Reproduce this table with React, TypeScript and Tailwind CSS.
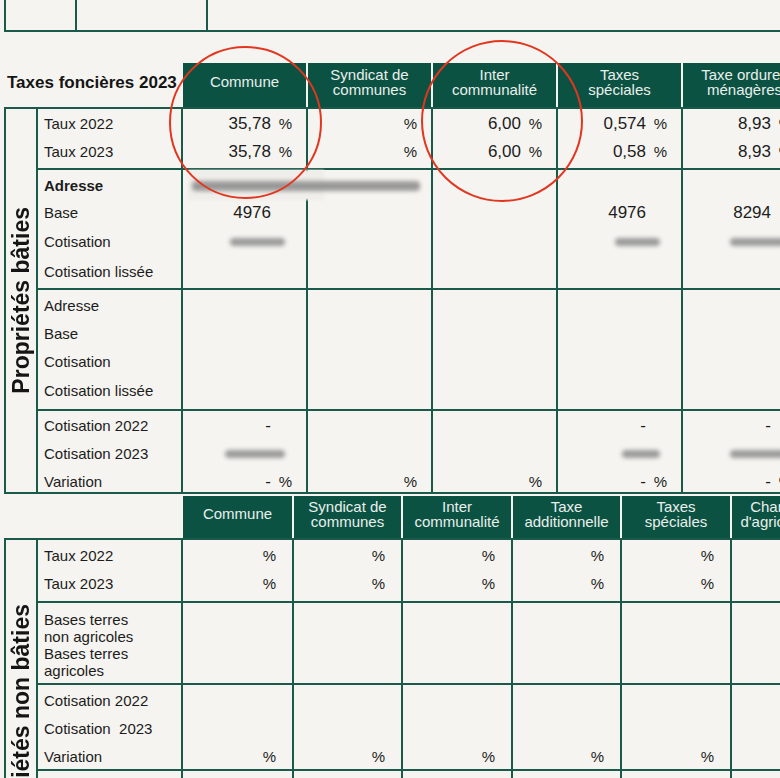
import React from "react"

type V = { n?: string; p?: boolean; b?: number }
type Row = { label: string; bold?: boolean; h: string; v?: V[] }
type Group = { h: string; pt: string; rows: Row[]; lines?: string[] }

const P: V = { p: true }
const E: V = {}

const head1 = [
  { w: "w-[123px]", t: "Commune" },
  { w: "w-[123px]", t: "Syndicat de\ncommunes" },
  { w: "w-[123px]", t: "Inter\ncommunalité" },
  { w: "w-[123px]", t: "Taxes\nspéciales" },
  { w: "w-[123px]", t: "Taxe ordures\nménagères" },
]

const head2 = [
  { w: "w-[109px]", t: "Commune" },
  { w: "w-[107px]", t: "Syndicat de\ncommunes" },
  { w: "w-[108px]", t: "Inter\ncommunalité" },
  { w: "w-[107px]", t: "Taxe\nadditionnelle" },
  { w: "w-[108px]", t: "Taxes\nspéciales" },
  { w: "w-[98px]", t: "Chambre\nd'agriculture" },
]

// group heights include their 2px bottom rule
const bati: Group[] = [
  {
    h: "h-[61px]",
    pt: "pt-[1px]",
    rows: [
      { label: "Taux 2022", h: "h-[28px]", v: [{ n: "35,78", p: true }, P, { n: "6,00", p: true }, { n: "0,574", p: true }, { n: "8,93", p: true }] },
      { label: "Taux 2023", h: "h-[28px]", v: [{ n: "35,78", p: true }, P, { n: "6,00", p: true }, { n: "0,58", p: true }, { n: "8,93", p: true }] },
    ],
  },
  {
    h: "h-[120px]",
    pt: "pt-[2px]",
    rows: [
      { label: "Adresse", bold: true, h: "h-[28px]" },
      { label: "Base", h: "h-[26px]", v: [{ n: "4976" }, E, E, { n: "4976" }, { n: "8294" }] },
      { label: "Cotisation", h: "h-[32px]", v: [{ b: 55 }, E, E, { b: 45 }, { b: 55 }] },
      { label: "Cotisation lissée", h: "h-[28px]" },
    ],
  },
  {
    h: "h-[121px]",
    pt: "pt-[2px]",
    rows: [
      { label: "Adresse", h: "h-[28px]" },
      { label: "Base", h: "h-[28px]" },
      { label: "Cotisation", h: "h-[29px]" },
      { label: "Cotisation lissée", h: "h-[28px]" },
    ],
  },
  {
    h: "h-[81px]",
    pt: "pt-[1px]",
    rows: [
      { label: "Cotisation 2022", h: "h-[28px]", v: [{ n: "-" }, E, E, { n: "-" }, { n: "-" }] },
      { label: "Cotisation 2023", h: "h-[28px]", v: [{ b: 60 }, E, E, { b: 38 }, { b: 55 }] },
      { label: "Variation", h: "h-[28px]", v: [{ n: "-", p: true }, P, P, { n: "-", p: true }, { n: "-", p: true }] },
    ],
  },
]

const nonBati: Group[] = [
  {
    h: "h-[63px]",
    pt: "pt-[2px]",
    rows: [
      { label: "Taux 2022", h: "h-[28px]", v: [P, P, P, P, P, P] },
      { label: "Taux 2023", h: "h-[29px]", v: [P, P, P, P, P, P] },
    ],
  },
  {
    h: "h-[82px]",
    pt: "pt-[8px]",
    rows: [],
    lines: ["Bases terres", "non agricoles", "Bases terres", "agricoles"],
  },
  {
    h: "h-[86px]",
    pt: "pt-[2px]",
    rows: [
      { label: "Cotisation 2022", h: "h-[28px]" },
      { label: "Cotisation  2023", h: "h-[28px]" },
      { label: "Variation", h: "h-[28px]", v: [P, P, P, P, P, P] },
    ],
  },
  { h: "h-[80px]", pt: "pt-[2px]", rows: [] },
]

function Cell({ v, pr }: { v?: V; pr: string }) {
  if (v?.b) {
    return (
      <div className={`flex h-full items-center justify-end ${pr}`}>
        <span className="mr-[7px] h-[8px] rounded-sm bg-[#9b9b9b] blur-[2px]" style={{ width: v.b }} />
      </div>
    )
  }
  return (
    <div className={`flex h-full items-center justify-end ${pr}`}>
      {v?.n && <span className="text-[17px]">{v.n}</span>}
      <span className="w-[21px] text-right text-[15px]">{v?.p ? "%" : ""}</span>
    </div>
  )
}

function Header({ cols, title, h }: { cols: { w: string; t: string }[]; title?: string; h: string }) {
  return (
    <div className={`flex ${h} shrink-0`}>
      <div className="flex w-[183px] shrink-0 items-center pb-[5px] pl-[7px] text-[17px] font-bold text-[#151515]">
        {title}
      </div>
      {cols.map((c, i) => (
        <div
          key={i}
          className={`${c.w} mr-[2px] flex shrink-0 items-center justify-center bg-[#0c5243] pb-[7px] text-center text-[15px] leading-[15px] whitespace-pre-line text-[#e9efeb]`}
        >
          {c.t}
        </div>
      ))}
    </div>
  )
}

function Table({
  groups,
  cols,
  pr,
  title,
  titleBox,
}: {
  groups: Group[]
  cols: { w: string }[]
  pr: string
  title: string
  titleBox: string
}) {
  return (
    <div className="ml-[4px] flex shrink-0 border-y-2 border-[#1a5a4b]">
      <div className={`flex w-[34px] shrink-0 flex-col items-center border-x-2 border-[#1a5a4b] ${titleBox}`}>
        <span className="rotate-180 text-[23px] leading-none font-bold whitespace-nowrap text-[#151515] [writing-mode:vertical-rl]">
          {title}
        </span>
      </div>
      <div className="flex flex-col">
        {groups.map((g, gi) => (
          <div key={gi} className={`flex ${g.h} shrink-0 border-[#1a5a4b] ${gi < groups.length - 1 ? "border-b-2" : ""}`}>
            <div className={`w-[145px] shrink-0 border-r-2 border-[#1a5a4b] pl-[6px] ${g.pt} text-[15px] text-[#1c1c1c]`}>
              {g.lines ? (
                <div className="leading-[17px]">
                  {g.lines.map((l, i) => (
                    <div key={i}>{l}</div>
                  ))}
                </div>
              ) : (
                g.rows.map((r, ri) => (
                  <div key={ri} className={`flex ${r.h} items-center whitespace-pre ${r.bold ? "font-bold" : ""}`}>
                    {r.label}
                  </div>
                ))
              )}
            </div>
            {cols.map((c, ci) => (
              <div key={ci} className={`${c.w} box-content shrink-0 border-r-2 border-[#1a5a4b] ${g.pt} text-[#1c1c1c]`}>
                {g.rows.map((r, ri) => (
                  <div key={ri} className={r.h}>
                    <Cell v={r.v?.[ci]} pr={pr} />
                  </div>
                ))}
              </div>
            ))}
          </div>
        ))}
      </div>
    </div>
  )
}

export default function App() {
  return (
    <div className="relative h-[778px] w-[780px] overflow-hidden bg-[#f5f4f0] font-['Liberation_Sans',Arial,sans-serif]">
      <div className="flex h-[778px] w-[1000px] flex-col">
        <div className="ml-[4px] flex h-[32px] shrink-0 border-b-2 border-l-2 border-[#1a5a4b]">
          <div className="w-[71px] shrink-0 border-r-2 border-[#1a5a4b]" />
          <div className="w-[131px] shrink-0 border-r-2 border-[#1a5a4b]" />
        </div>

        <div className="mt-[31px]">
          <Header cols={head1} title="Taxes foncières 2023" h="h-[44px]" />
        </div>
        <Table groups={bati} cols={head1} pr="pr-[14px]" title="Propriétés bâties" titleBox="justify-center" />

        <div className="mt-[2px]">
          <Header cols={head2} h="h-[42px]" />
        </div>
        <Table groups={nonBati} cols={head2} pr="pr-[16px]" title="Propriétés non bâties" titleBox="justify-start pt-[64px]" />
      </div>

      {/* masked address */}
      <div className="absolute top-[170px] left-[188px] h-[30px] w-[136px] bg-[#efeeea] blur-[1px]" />
      <div className="absolute top-[181px] left-[192px] h-[10px] w-[228px] rounded-sm bg-[#8a8a8a] opacity-85 blur-[2px]" />

      {/* annotation circles */}
      <div className="absolute top-[46px] left-[169px] h-[153px] w-[153px] rounded-full border-[2.5px] border-[#e2361f]" />
      <div className="absolute top-[40px] left-[421px] h-[162px] w-[162px] rounded-full border-[2.5px] border-[#e2361f]" />
    </div>
  )
}
